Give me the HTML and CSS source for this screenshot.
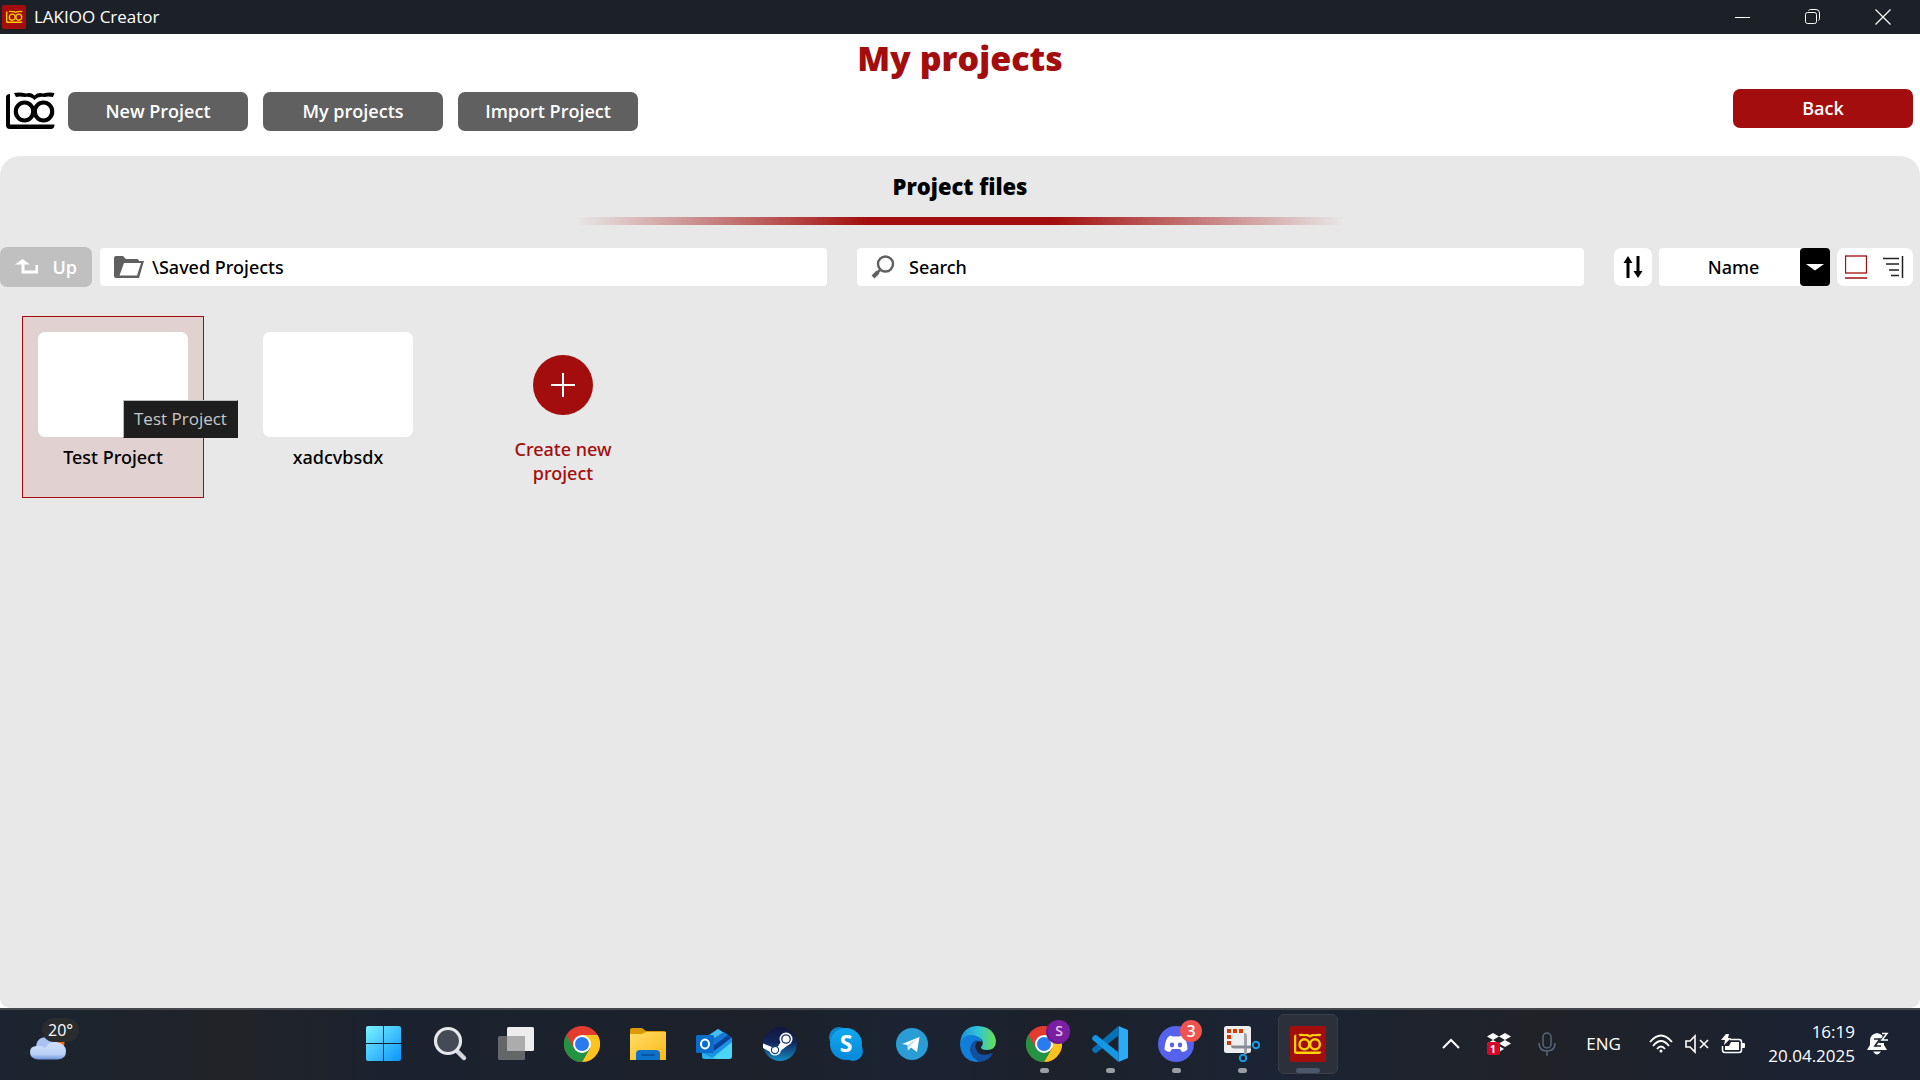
FILE: index.html
```html
<!DOCTYPE html>
<html lang="en">
<head>
<meta charset="utf-8">
<title>LAKIOO Creator</title>
<link rel="stylesheet" href="styles.css">
</head>
<body>
<svg class="defs" aria-hidden="true">
  <symbol id="lakioo" viewBox="0 0 50 38">
    <path d="M4 2v30.500h44.500q0 4.500-4 4.500H4q-4 0-4-4V5q0-3 4-3z" fill="currentColor"/>
    <path d="M8 1q6-1 12 .5 5-1.500 8.500 2 3.500-3.500 8.500-2 6-1.500 11.500-.5l-1.500 4q-5-1-8.500 0-6-1-10 3-4-4-10-3-5-1-8.500 0z" fill="currentColor"/>
    <ellipse cx="18.500" cy="19.500" rx="8.700" ry="9" fill="none" stroke="currentColor" stroke-width="4.200"/>
    <ellipse cx="37.500" cy="19.500" rx="8.700" ry="9" fill="none" stroke="currentColor" stroke-width="4.200"/>
  </symbol>
  <symbol id="chrome" viewBox="0 0 36 36">
    <circle cx="18" cy="18" r="18" fill="#e33b2e"/>
    <path d="M18 9h15.600A18 18 0 0 1 18 36l7.800-13.500z" fill="#fcc31e"/>
    <path d="M2.400 9A18 18 0 0 0 18 36l7.800-13.500L18 26 10.200 22.500z" fill="#229342"/>
    <circle cx="18" cy="18" r="9" fill="#fff"/>
    <circle cx="18" cy="18" r="7" fill="#2a7bf0"/>
  </symbol>
</svg>

<header class="titlebar">
  <span class="title-icon"><svg width="17" height="14"><use href="#lakioo"/></svg></span>
  <span class="title-text">LAKIOO Creator</span>
  <div class="window-controls">
    <button type="button" aria-label="Minimize"><svg width="16" height="16"><path d="M0 8.500h15" stroke="#fff"/></svg></button>
    <button type="button" aria-label="Restore"><svg width="16" height="16" fill="none" stroke="#fff"><rect x=".5" y="3.500" width="11" height="11" rx="2"/><path d="M3.500 1.500q1-1 2-1H11q3.500 0 3.500 3.500v5.500q0 1-1 2"/></svg></button>
    <button type="button" aria-label="Close"><svg width="16" height="16"><path d="M.5.500l15 15m0-15l-15 15" stroke="#fff" stroke-width="1.200"/></svg></button>
  </div>
</header>

<main class="app">
  <h1>My projects</h1>
  <div class="topbar">
    <nav class="nav">
      <svg class="logo" width="50" height="38"><use href="#lakioo"/></svg>
      <button type="button" class="btn">New Project</button>
      <button type="button" class="btn">My projects</button>
      <button type="button" class="btn">Import Project</button>
    </nav>
    <button type="button" class="btn back">Back</button>
  </div>

  <section class="panel">
    <h2>Project files</h2>
    <div class="divider"></div>
    <div class="toolbar">
      <button type="button" class="up" disabled>
        <svg width="24" height="16"><path d="M7.500 0L15 5.500H9.500V11.500h11V6H23v8.500H6.500V5.500H0z" fill="#fff"/></svg>
        Up
      </button>
      <label class="field path">
        <svg width="30" height="24"><path d="M0 3q0-2 2-2h7l3 3h11q2 0 2 2h5l-5 17H2q-2 0-2-2z" fill="#606060"/><path d="M10 8h17l-4 12.500H5.500z" fill="#fff"/></svg>
        <input type="text" value="\Saved Projects" aria-label="Path">
      </label>
      <label class="field search">
        <svg width="24" height="24" fill="none" stroke="#606060"><circle cx="14.500" cy="9" r="7.500" stroke-width="2.400"/><path d="M9 15l-3 3" stroke-width="2.500"/><path d="M7 17l-5 5" stroke-width="4"/></svg>
        <input type="text" placeholder="Search" aria-label="Search">
      </label>
      <button type="button" class="sort" aria-label="Sort order"><svg width="20" height="24"><path d="M5 23V5M15 1v18" stroke="#000" stroke-width="3"/><path d="M5 1l4.500 7h-9zM15 23l4.500-7h-9z"/></svg></button>
      <div class="combo">
        <select aria-label="Sort by"><option>Name</option><option>Date</option></select>
        <span class="combo-arrow"><svg width="18" height="7"><path d="M0 0h18L9 6.500z" fill="#fff"/></svg></span>
      </div>
      <div class="views">
        <button type="button" aria-label="Thumbnails"><svg width="22" height="24" fill="none" stroke="#a30d0d"><rect x=".5" y="1" width="21" height="17" stroke-width="1.300"/><path d="M0 23h22" stroke-width="1.500"/></svg></button>
        <button type="button" aria-label="List"><svg width="22" height="24" fill="none" stroke="#222" stroke-width="1.500"><path d="M0 3.500h16M3 9h13M6 15h10M8 20.500h8M19.500 1v22"/></svg></button>
      </div>
    </div>

    <ul class="tiles">
      <li>
        <button type="button" class="tile selected"><span class="thumb"></span><span class="name">Test Project</span></button>
        <span class="tooltip" role="tooltip">Test Project</span>
      </li>
      <li><button type="button" class="tile"><span class="thumb"></span><span class="name">xadcvbsdx</span></button></li>
      <li><button type="button" class="tile create"><span class="plus"><svg width="24" height="24"><path d="M0 12h24M12 0v24" stroke="#fff" stroke-width="2"/></svg></span><span>Create new project</span></button></li>
    </ul>
  </section>
</main>

<footer class="taskbar">
  <div class="weather">
    <svg width="36" height="24">
      <defs><linearGradient id="cloud" x2="0" y2="1"><stop stop-color="#cfe0fb"/><stop offset=".7" stop-color="#b9d0f5"/><stop offset="1" stop-color="#6f94dd"/></linearGradient></defs>
      <circle cx="28" cy="7" r="6.500" fill="#f0701c"/>
      <path d="M6 12Q6 1 17 1q8 0 10 7l-8 9H8z" fill="#a9c3f1"/>
      <path d="M7 10q4-1 8 2 4-7 11-6 10 2 10 9 0 8-8 8.500H8Q0 23 0 16q0-6 7-6z" fill="url(#cloud)"/>
    </svg>
    <span class="temp">20°</span>
  </div>

  <div class="apps">
    <button type="button" aria-label="Start"><svg width="36" height="36"><defs><linearGradient id="win" x2="1" y2="1"><stop stop-color="#7af3ff"/><stop offset="1" stop-color="#0b93fb"/></linearGradient></defs><path d="M2 0h15v17H0V2q0-2 2-2zM18 0h15q2 0 2 2v15H18zM0 18h17v17H2q-2 0-2-2zM18 18h17v15q0 2-2 2H18z" fill="url(#win)"/></svg></button>
    <button type="button" aria-label="Search"><svg width="36" height="36"><path d="M24.500 24.500l7.500 7.500" stroke="#d4d6da" stroke-width="4.500" stroke-linecap="round"/><circle cx="16" cy="15" r="12.500" fill="#444b57" stroke="#e6e7ea" stroke-width="3.200"/></svg></button>
    <button type="button" aria-label="Task view"><svg width="36" height="36"><rect y="10" width="27" height="24" rx="1.500" fill="#656667"/><rect x="9" y="1" width="27" height="24" rx="1.500" fill="#ededee"/><path d="M9 10h18v15H9z" fill="#acacad"/></svg></button>
    <button type="button" aria-label="Chrome"><svg width="36" height="36"><use href="#chrome"/></svg></button>
    <button type="button" aria-label="Files"><svg width="36" height="36"><defs><linearGradient id="fold" x2="1" y2="1"><stop stop-color="#ffdd67"/><stop offset="1" stop-color="#fbb915"/></linearGradient></defs><path d="M0 4q0-2 2-2h9q2 0 3 1.500L16 5h18q2 0 2 2v3H0z" fill="#dc9b04"/><path d="M0 8h12l4-2h20v28H0z" fill="url(#fold)"/><path d="M6 34v-6q0-4 4-4h16q4 0 4 4v6z" fill="#0b72cb"/><path d="M11 29h14" stroke="#0a4a91" stroke-width="1.500"/></svg></button>
    <button type="button" aria-label="Outlook"><svg width="36" height="36"><path d="M6 13L22 3l14 9v18q0 3-3 3H9q-3 0-3-3z" fill="#1a91e3"/><path d="M10 12L22 3l6 4-16 12z" fill="#4bbcf1"/><path d="M14 17l16-9 5 4-17 13z" fill="#083f9b"/><path d="M13 15L28 6l4 3-16 12z" fill="#1478d7"/><path d="M36 16v14q0 3-3 3H15z" fill="#4bd5f4"/><path d="M6 27l14 6H9q-3 0-3-3z" fill="#28b4ee"/><rect y="9" width="18" height="18" rx="1.500" fill="#0b6dcb"/><ellipse cx="9" cy="18" rx="4" ry="4.500" fill="none" stroke="#fff" stroke-width="2"/></svg></button>
    <button type="button" aria-label="Steam"><svg width="36" height="36"><defs><linearGradient id="steam" x2="0" y2="1"><stop stop-color="#15153c"/><stop offset=".45" stop-color="#12275c"/><stop offset="1" stop-color="#168ac4"/></linearGradient></defs><circle cx="18" cy="18" r="17" fill="url(#steam)"/><path d="M1 17.500l10 4 5-1 3-5 9 2-9 7q-1 5-6 5-4 0-5.500-4L1 22z" fill="#fff"/><circle cx="13" cy="24" r="3.600" fill="none" stroke="#1a3d77" stroke-width="1.200"/><circle cx="24" cy="13" r="6.500" fill="#fff"/><circle cx="24" cy="13" r="4.200" fill="none" stroke="#173166" stroke-width="1.300"/></svg></button>
    <button type="button" aria-label="Skype"><svg width="36" height="36"><defs><linearGradient id="sky" x2="0" y2="1"><stop stop-color="#11a9ee"/><stop offset="1" stop-color="#0688d9"/></linearGradient></defs><circle cx="11" cy="11" r="10" fill="#0b86ce"/><circle cx="25" cy="25" r="10" fill="#0b8bd8"/><circle cx="18" cy="18" r="16" fill="url(#sky)"/><text x="18" y="26" text-anchor="middle" class="glyph-lg">S</text></svg></button>
    <button type="button" aria-label="Telegram"><svg width="36" height="36"><circle cx="18" cy="18" r="16" fill="#2a9cd6"/><path d="M8 18l17.500-7L23 26l-6-4.500-3 3-.5-5.500z" fill="#fff"/><path d="M14 24.500l-.5-5.500L23 12.500 15.500 21z" fill="#bddcf0"/></svg></button>
    <button type="button" aria-label="Edge"><svg width="36" height="36"><defs><linearGradient id="edge"><stop stop-color="#1b8fd8"/><stop offset=".5" stop-color="#31c4d8"/><stop offset="1" stop-color="#68e04e"/></linearGradient></defs><path d="M0 17Q2 0 18 0q16 1 18 15 0 9-9 9-6 0-6-3 3-3 1-7Q16 6 0 17z" fill="url(#edge)"/><path d="M0 18Q2 9 12 9q9 1 10 7-6-3-9 2-2 10 9 16-3 2-6 2Q1 34 0 18z" fill="#117fd9"/><path d="M16 14q-6 3-6 10 1 8 10 12 9-1 13-9-14 5-17-4-2-5 2-8z" fill="#124f9e"/></svg></button>
    <button type="button" aria-label="Chrome profile"><svg width="36" height="36"><use href="#chrome"/></svg><span class="badge purple">S</span><i class="dot"></i></button>
    <button type="button" aria-label="Visual Studio Code"><svg width="36" height="36"><path d="M26.500 0L36 4v28l-9.500 4z" fill="#2caaf4"/><path d="M26.500 0v9.500L5 26.500q-1.500 1-3 0l-1.500-1.700q-1-1.300 0-2.500z" fill="#0870b7"/><path d="M26.500 36v-9.500L5 9.500q-1.500-1-3 0L.5 11.200q-1 1.300 0 2.500z" fill="#1497e5"/></svg><i class="dot"></i></button>
    <button type="button" aria-label="Discord"><svg width="36" height="36"><circle cx="18" cy="18" r="18" fill="#5562ec"/><path d="M12 9.500l3 1h6l3-1q5 3 5.500 14-2 2-5.500 2.500l-2-3h-8l-2 3Q8.500 25.500 6.500 23.500 7 12.500 12 9.500z" fill="#fff"/><ellipse cx="14" cy="19" rx="2.200" ry="2.400" fill="#5562ec"/><ellipse cx="22" cy="19" rx="2.200" ry="2.400" fill="#5562ec"/></svg><span class="badge red">3</span><i class="dot"></i></button>
    <button type="button" aria-label="Snipping tool"><svg width="36" height="36"><rect width="27" height="27" rx="2.500" fill="#eceeef"/><path d="M3 3h4v4H3zM9 3h4v4H9zM15 3h4v4h-4zM3 9h4v4H3zM3 15h4v4H3z" fill="#d83b01"/><path d="M20 7q3 0 3 3v18h-3z" fill="#9fa4a9"/><path d="M7 19.500h20v3H10q-3 0-3-3z" fill="#868b91"/><circle cx="32" cy="19" r="3.200" fill="none" stroke="#1a9ce2" stroke-width="2"/><circle cx="19" cy="32" r="3.200" fill="none" stroke="#1a9ce2" stroke-width="2"/></svg><i class="dot"></i></button>
    <button type="button" class="active" aria-label="LAKIOO Creator"><span class="app-tile"><svg width="28" height="22"><use href="#lakioo"/></svg></span><i class="dot wide"></i></button>
  </div>

  <div class="tray">
    <button type="button" aria-label="Hidden icons"><svg width="18" height="12"><path d="M1 10l8-8 8 8" fill="none" stroke="#fff" stroke-width="2"/></svg></button>
    <button type="button" aria-label="Dropbox"><svg width="24" height="24"><path d="M6 1l6 3.500L6 8 0 4.500zM18 1l6 3.500L18 8l-6-3.500zM18 8l6 3.500-6 3.500-6-3.500zM6 8l6 3.500L6 15l-6-3.500zM12 14l5 3-5 3z" fill="#fff"/><rect y="10" width="13" height="13" rx="2.500" fill="#d8052b"/><text x="6" y="21" text-anchor="middle" class="glyph-sm">1</text></svg></button>
    <button type="button" aria-label="Microphone"><svg width="18" height="26" fill="none" stroke="#59657c" stroke-width="1.500"><rect x="5" y="2" width="8" height="15" rx="4"/><path d="M1 12q0 8 8 8t8-8M9 20v5"/></svg></button>
    <button type="button" class="lang">ENG</button>
    <div class="quick">
      <svg width="24" height="20" fill="none" stroke="#fff" stroke-width="1.800"><path d="M1 8q11-13 22 0M4 12q8-10 16 0M8 15q4-5 8 0"/><circle cx="12" cy="17" r="1.500" fill="#fff" stroke="none"/></svg>
      <svg width="24" height="20" fill="none" stroke="#fff" stroke-width="1.600"><path d="M1 7h4l5-5v16l-5-5H1zM15 6l8 8m0-8l-8 8"/></svg>
      <svg width="24" height="20"><path d="M9 5.500h9q2.500 0 2.500 2.500v8q0 2.500-2.500 2.500H4Q1.500 18.500 1.500 16v-4" fill="none" stroke="#fff" stroke-width="1.500"/><path d="M10 8h8v8H4v-4h4zM21 9h2q1 0 1 1v3q0 1-1 1h-2zM5 0h3L7 4h3L3 11l1-5H0z" fill="#fff"/></svg>
    </div>
    <div class="clock"><span>16:19</span><span>20.04.2025</span></div>
    <button type="button" class="bell" aria-label="Notifications"><svg width="22" height="24"><path d="M10 1q7 1 7 8v4l3 5H0l3-5V9q0-7 7-8zM6 19.500h8q-4 6-8 0z" fill="#fff"/><path d="M7 7h6l-5 7h6" fill="none" stroke="#1b2331" stroke-width="1.700"/><path d="M15 1.500h5L15 9h6" fill="none" stroke="#1b2331" stroke-width="4"/><path d="M15 1.500h5L15 8h6" fill="none" stroke="#fff" stroke-width="1.500"/></svg></button>
  </div>
</footer>
</body>
</html>
```
FILE: styles.css
```css
* { box-sizing: border-box; }
body {
  margin: 0;
  min-height: 100vh;
  display: flex;
  flex-direction: column;
  background: #fff;
  color: #000;
  font: 500 18px/24px "Noto Sans", "Open Sans", sans-serif;
}
button, input, select {
  font: inherit;
  color: inherit;
  border: 0;
  padding: 0;
  background: none;
}
svg { display: block; flex: none; }
.defs { position: absolute; width: 0; height: 0; }

/* window title bar */
.titlebar {
  display: flex;
  align-items: center;
  height: 34px;
  padding-left: 2px;
  background: #1c2128;
  color: #fff;
  font-family: "Open Sans", sans-serif;
  font-size: 17px;
  font-weight: 400;
}
.title-icon {
  display: grid;
  place-items: center;
  width: 24px;
  height: 24px;
  margin-right: 8px;
  border-radius: 2px;
  background: #a30d0d;
  color: #ffcc00;
}
.window-controls { display: flex; margin-left: auto; padding-right: 2px; }
.window-controls button {
  display: grid;
  place-items: center;
  width: 70px;
  height: 34px;
}

/* application header */
.app { flex: 1; display: flex; flex-direction: column; }
h1 {
  margin: 0;
  text-align: center;
  color: #a30d0d;
  font-family: "Open Sans", sans-serif;
  font-size: 34px;
  font-weight: 800;
  line-height: 48px;
}
.topbar {
  display: flex;
  justify-content: space-between;
  align-items: flex-start;
  padding: 7px 7px 25px 6px;
}
.nav { display: flex; gap: 15px; padding-top: 3px; }
.logo { margin-right: -3px; }
.btn {
  width: 180px;
  height: 39px;
  padding-bottom: 2px;
  border-radius: 7px;
  background: #606060;
  color: #fff;
  font-family: "Open Sans", sans-serif;
  font-weight: 600;
}
.back { background: #a30d0d; }

/* project files */
.panel {
  flex: 1;
  display: flex;
  flex-direction: column;
  border-radius: 20px 20px 10px 10px;
  background: #e8e8e8;
}
h2 {
  margin: 0;
  padding: 14px 0 15px;
  text-align: center;
  font-family: "Open Sans", sans-serif;
  font-size: 22px;
  font-weight: 800;
  line-height: 32px;
}
.divider {
  width: 40%;
  height: 8px;
  margin: 0 auto;
  background: linear-gradient(90deg, #a30d0d00, #a30d0d 38%, #a30d0d 62%, #a30d0d00);
}
.toolbar {
  display: flex;
  align-items: center;
  padding: 22px 7px 0 0;
}
.up {
  display: flex;
  align-items: center;
  justify-content: space-between;
  width: 92px;
  height: 40px;
  margin-right: 8px;
  padding: 0 15px;
  border-radius: 7px;
  background: #c0c0c0;
  color: #fff;
  font-family: "Open Sans", sans-serif;
  font-weight: 600;
}
.field {
  flex: 1;
  display: flex;
  align-items: center;
  height: 38px;
  padding: 0 14px;
  border-radius: 4px;
  background: #fff;
}
.field input { flex: 1; min-width: 0; outline: 0; }
.field input::placeholder { color: #000; opacity: 1; }
.path { gap: 8px; margin-right: 30px; }
.search { gap: 14px; margin-right: 30px; }
.sort {
  display: grid;
  place-items: center;
  width: 38px;
  height: 38px;
  margin-right: 7px;
  border-radius: 7px;
  background: #fff;
}
.combo {
  display: flex;
  width: 171px;
  height: 38px;
  margin-right: 7px;
  border-radius: 4px;
  background: #fff;
}
.combo select {
  flex: 1;
  padding-left: 8px;
  appearance: none;
  text-align-last: center;
}
.combo-arrow {
  display: grid;
  place-items: center;
  width: 30px;
  border-radius: 4px;
  background: #000;
}
.views {
  display: flex;
  justify-content: space-between;
  align-items: center;
  width: 76px;
  height: 38px;
  padding: 0 8px;
  border-radius: 7px;
  background: #fff;
}

.tiles {
  display: flex;
  flex-wrap: wrap;
  gap: 43px;
  margin: 0;
  padding: 29px 22px;
  list-style: none;
}
.tiles li { position: relative; }
.tile {
  display: flex;
  flex-direction: column;
  align-items: center;
  width: 182px;
  height: 182px;
  padding: 15px;
  border: 1px solid transparent;
}
.tile.selected { border-color: #a30d0d; background: #e1d1d1; }
.thumb {
  width: 150px;
  height: 105px;
  margin-bottom: 8px;
  border-radius: 7px;
  background: #fff;
}
.create { padding: 38px 35px 0; color: #a30d0d; }
.plus {
  display: grid;
  place-items: center;
  width: 60px;
  height: 60px;
  margin-bottom: 22px;
  border-radius: 50%;
  background: #a30d0d;
}
.tooltip {
  position: absolute;
  left: 101px;
  top: 84px;
  padding: 6px 10px;
  border: 1px solid #1e1e1e;
  border-color: #bbb #1e1e1e #1e1e1e #bbb;
  background: #1e1e1e;
  color: #c8c8c8;
  font-family: "Open Sans", sans-serif;
  font-size: 17px;
  font-weight: 400;
  white-space: nowrap;
}

/* taskbar */
.taskbar {
  display: grid;
  grid-template-columns: 351fr auto 579fr;
  align-items: center;
  height: 72px;
  padding-bottom: 2px;
  border-top: 2px solid #45474c;
  background: linear-gradient(90deg, #1b2430, #212327 12%, #1b222f 20%, #1c212a 40%, #1b2333 48%, #1c212a 55%, #1b2434 66%, #202227 80%, #1b2232 95%);
  color: #fff;
  font-family: "Open Sans", sans-serif;
  font-size: 16px;
  font-weight: 400;
}
.weather { position: relative; padding: 7px 0 0 30px; }
.temp {
  position: absolute;
  left: 42px;
  top: -11px;
  padding: 0 6px;
  border-radius: 12px;
  background: #2b2c2e;
}
.apps { display: flex; }
.apps button {
  position: relative;
  display: grid;
  place-items: center;
  width: 60px;
  height: 60px;
  margin: 0 3px;
  border: 1px solid transparent;
  border-radius: 6px;
}
.apps .active { border-color: #3a3f4a; background: #2b303b; }
.app-tile {
  display: grid;
  place-items: center;
  width: 36px;
  height: 36px;
  border-radius: 2px;
  background: #a30d0d;
  color: #ffd400;
}
.dot {
  position: absolute;
  bottom: 0;
  left: 25px;
  width: 9px;
  height: 5px;
  border-radius: 3px;
  background: #9a9da3;
}
.dot.wide { left: 17px; width: 24px; background: #4b566b; }
.badge {
  position: absolute;
  top: 5px;
  right: 3px;
  width: 22px;
  height: 22px;
  border-radius: 50%;
  text-align: center;
  line-height: 22px;
}
.purple {
  background: #7a1fa2;
  box-shadow: -1px 1px 0 1px #6a1a8e;
  color: #e3c8ee;
  font-size: 14px;
  font-weight: 600;
}
.red { background: #ef5350; font-weight: 600; }
.glyph-lg { font-size: 23px; font-weight: 700; fill: #fff; }
.glyph-sm { font-size: 11px; font-weight: 700; fill: #fff; }

.tray { display: flex; align-items: center; justify-content: flex-end; padding-right: 19px; }
.tray button { display: grid; place-items: center; width: 48px; height: 48px; }
.tray .lang { width: 65px; margin-right: 7px; font-size: 17px; }
.quick { display: flex; gap: 12px; padding: 0 6px; }
.clock {
  display: flex;
  flex-direction: column;
  align-items: flex-end;
  width: 104px;
  font-size: 17px;
}
.tray .bell { width: 46px; }
```
